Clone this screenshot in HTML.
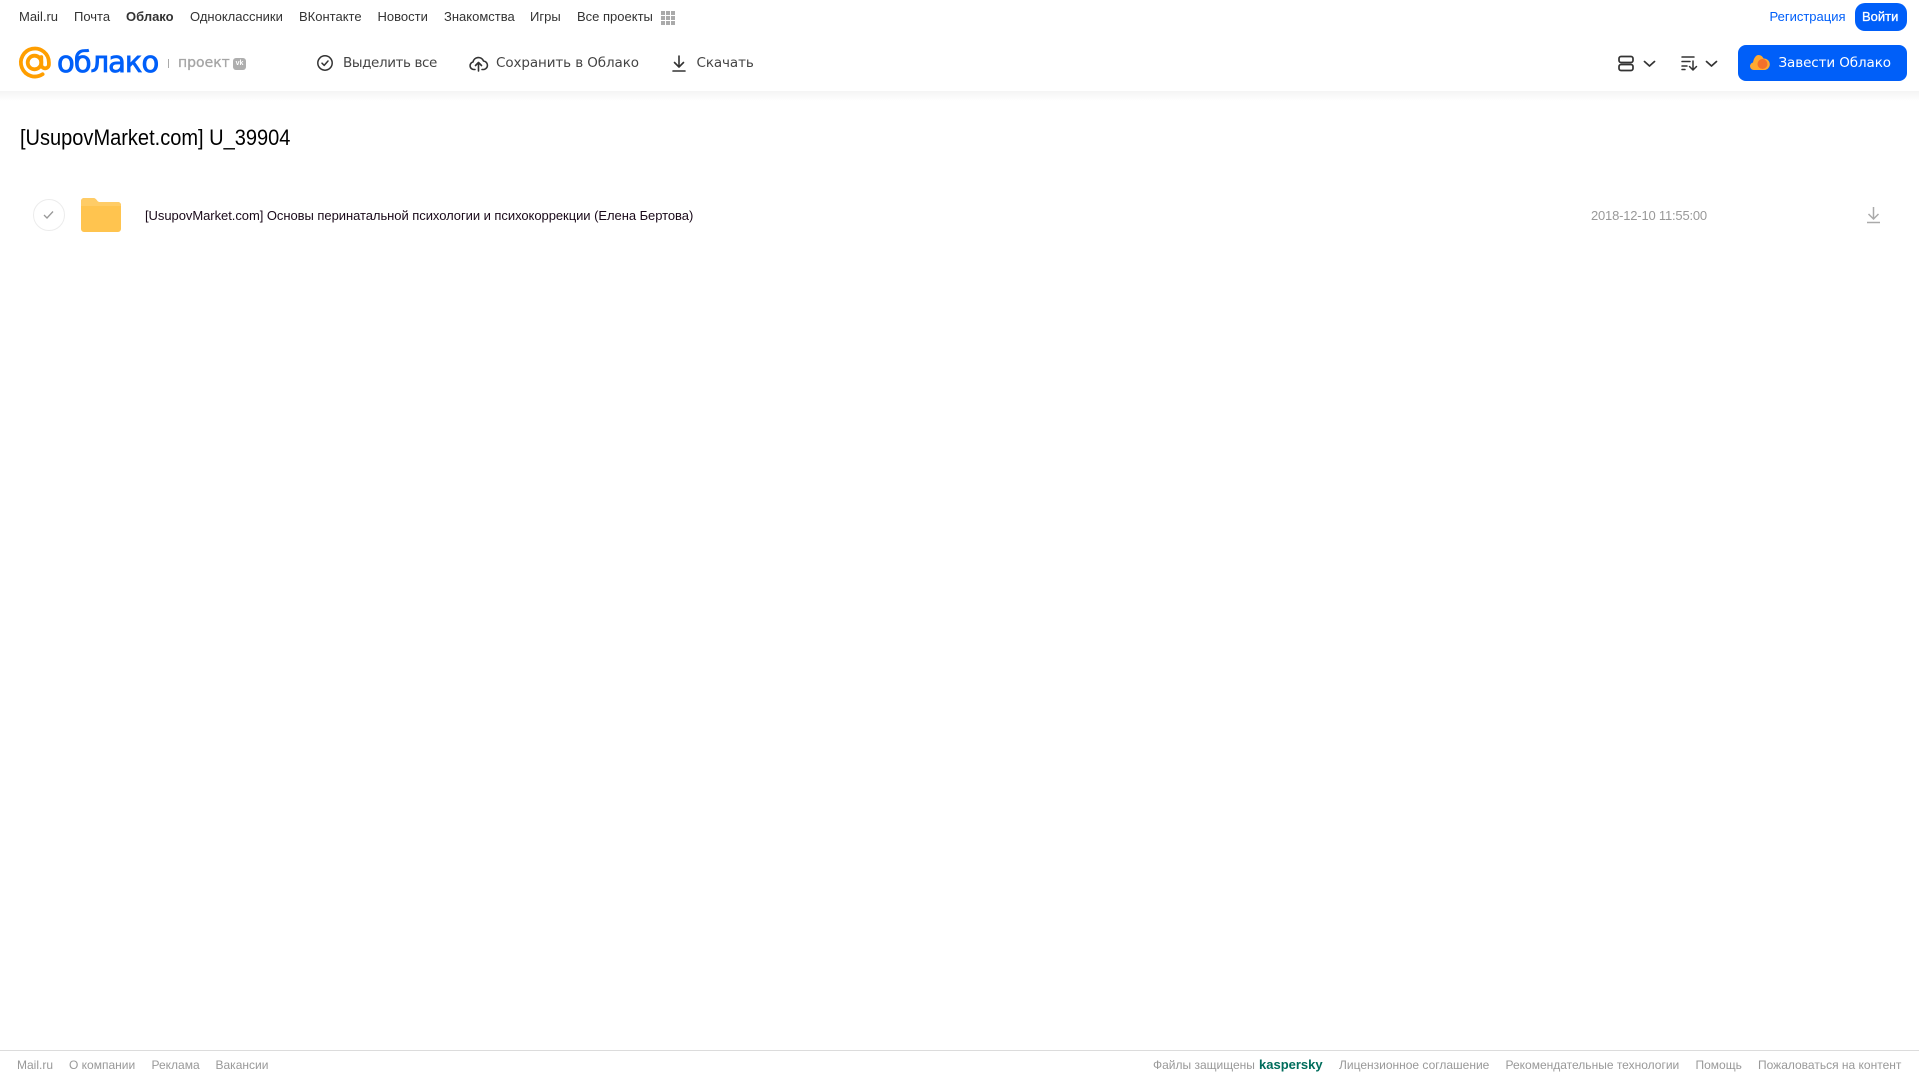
<!DOCTYPE html>
<html lang="ru"><head><meta charset="utf-8"><title>[UsupovMarket.com] U_39904</title>
<style>
html,body{margin:0;padding:0;background:#fff}
body{width:1919px;height:1079px;position:relative;overflow:hidden;font-family:"Liberation Sans",sans-serif}
.t{position:absolute;white-space:nowrap;line-height:20px;height:20px}
.n{font-size:13px;top:7px;color:#333}
.b{font-family:"DejaVu Sans",sans-serif;font-size:13.5px;top:53px;color:#444}
.f{font-size:12px;top:1055px;color:#999}
svg{position:absolute;overflow:visible}
#hdr{position:absolute;left:0;top:91px;width:1919px;height:10px;background:linear-gradient(#f4f4f4,#fff)}
</style></head><body>
<div id="hdr"></div>
<span class="t n" style="left:19px">Mail.ru</span>
<span class="t n" style="left:74px">Почта</span>
<span class="t n" style="left:126px;font-weight:bold">Облако</span>
<span class="t n" style="left:190px">Одноклассники</span>
<span class="t n" style="left:299px">ВКонтакте</span>
<span class="t n" style="left:377.500px">Новости</span>
<span class="t n" style="left:444px">Знакомства</span>
<span class="t n" style="left:530px">Игры</span>
<span class="t n" style="left:577px">Все проекты</span>
<svg style="left:0;top:0" width="700" height="30" fill="#aaa"><rect x="661" y="11" width="4" height="4"/><rect x="666" y="11" width="4" height="4"/><rect x="671" y="11" width="4" height="4"/><rect x="661" y="16" width="4" height="4"/><rect x="666" y="16" width="4" height="4"/><rect x="671" y="16" width="4" height="4"/><rect x="661" y="21" width="4" height="4"/><rect x="666" y="21" width="4" height="4"/><rect x="671" y="21" width="4" height="4"/></svg>
<span class="t n" style="left:1769.500px;color:#005ff9">Регистрация</span>
<div style="position:absolute;left:1855px;top:3px;width:52px;height:28px;border-radius:10px;background:#005ff9"></div>
<span class="t n" style="left:1862px;color:#fff;-webkit-text-stroke:.3px #fff">Войти</span>

<svg style="left:0;top:0" width="60" height="90" fill="none" stroke="#ff9e00" stroke-width="3.800" stroke-linecap="round"><circle cx="34.500" cy="62.500" r="6.800"/><path d="M41.300 57v7.500a3.800 3.800 0 0 0 7.600 0v-2a14 14 0 1 0-6.300 11.700"/></svg>
<span class="t" style="left:57px;top:44px;height:36px;line-height:36px;font-family:'DejaVu Sans',sans-serif;font-size:29px;color:#005ff9;-webkit-text-stroke:.8px #005ff9;letter-spacing:-1px">облако</span>
<div style="position:absolute;left:168px;top:59px;width:1px;height:9px;background:#aaa"></div>
<span class="t" style="left:178px;top:53px;font-family:'DejaVu Sans',sans-serif;font-size:14px;color:#a5a5a5;-webkit-text-stroke:.3px #a5a5a5">проект</span>
<div style="position:absolute;left:233px;top:58px;width:13px;height:12px;border-radius:3px;background:#aeaeae;color:#fff;font-size:7px;font-weight:bold;line-height:12px;text-align:center">vk</div>

<svg style="left:317px;top:55px" width="16" height="16" viewBox="0 0 16 16" fill="none" stroke="#333" stroke-width="1.500"><circle cx="8" cy="8" r="7.200"/><path d="M5 8.200l2.200 2.200L11 6" stroke-linecap="round" stroke-linejoin="round"/></svg>
<span class="t b" style="left:343px;letter-spacing:-.4px">Выделить все</span>
<svg style="left:469px;top:55px" width="19" height="17" viewBox="0 0 19 17" fill="none" stroke="#333" stroke-width="1.600" stroke-linecap="round" stroke-linejoin="round"><path d="M6 14.500H4.800a3.800 3.800 0 0 1-.8-7.500 5.500 5.500 0 0 1 10.500-1 4.300 4.300 0 0 1 .5 8.500H13"/><path d="M9.500 16V8M6.500 10.500l3-3 3 3"/></svg>
<span class="t b" style="left:496px;letter-spacing:-.1px">Сохранить в Облако</span>
<svg style="left:672px;top:55px" width="14" height="17" viewBox="0 0 14 17" fill="none" stroke="#333" stroke-width="1.600" stroke-linecap="round" stroke-linejoin="round"><path d="M7 1v10.500M2.500 7.500L7 12l4.500-4.500"/><path d="M1 16h12"/></svg>
<span class="t b" style="left:696.500px;letter-spacing:-.1px">Скачать</span>

<svg style="left:1618px;top:55px" width="40" height="17" fill="none" stroke="#333" stroke-width="1.700"><rect x="1" y="1.500" width="14" height="6" rx="2"/><rect x="1" y="9.500" width="14" height="6" rx="2"/><path d="M26.500 6.500l5 4.500 5-4.500" stroke-linecap="round" stroke-linejoin="round"/></svg>
<svg style="left:1681px;top:55px" width="40" height="17" fill="none" stroke="#333" stroke-width="1.500" stroke-linecap="round" stroke-linejoin="round"><path d="M1 2h12M1 6.500h8M1 11h5M1 14.500h3"/><path d="M12 6v9M8.500 11.500l3.500 3.500 3.500-3.500"/><path d="M25.500 6.500l5 4.500 5-4.500" stroke-width="1.700"/></svg>
<div style="position:absolute;left:1738px;top:45px;width:169px;height:36px;border-radius:8px;background:#005ff9"></div>
<svg style="left:1750px;top:54px" width="19" height="17" viewBox="0 0 19 17"><path d="M4 16a3.800 3.800 0 0 1-1-7.500C3.800 4 6 1 8.500 1c2.500 0 4 1.500 5 3.500a5.500 5.500 0 0 1 1 11.500z" fill="#ffa930"/><circle cx="12.500" cy="10" r="5" fill="#f4702a"/></svg>
<span class="t b" style="left:1778.500px;color:#fff;letter-spacing:-.1px">Завести Облако</span>

<span class="t" style="left:20px;top:125px;height:26px;line-height:26px;font-size:22px;color:#000;transform:scaleX(.91);transform-origin:left center">[UsupovMarket.com] U_39904</span>

<div style="position:absolute;left:33px;top:199px;width:30px;height:30px;border:1px solid #ececec;border-radius:50%"></div>
<svg style="left:43px;top:210px" width="12" height="10" fill="none" stroke="#999" stroke-width="1.300"><path d="M1 5l3 3 6-6.500"/></svg>
<svg style="left:81px;top:198px" width="40" height="34" viewBox="0 0 40 34"><path d="M3 0h9c2 0 3 1 4 2.500S18 4 19 4h18a3 3 0 0 1 3 3v24a3 3 0 0 1-3 3H3a3 3 0 0 1-3-3V3a3 3 0 0 1 3-3z" fill="#ffc44f"/><path d="M0 8h40v-1a3 3 0 0 0-3-3H19c-1 0-2 0-3-1.500S14 0 12 0H3a3 3 0 0 0-3 3z" fill="#ffcc66"/></svg>
<span class="t" style="left:145px;top:206px;font-size:13px;color:#1a0a1a;letter-spacing:-.05px">[UsupovMarket.com] Основы перинатальной психологии и психокоррекции (Елена Бертова)</span>
<span class="t" style="left:1591px;top:206px;font-size:13px;color:#999;letter-spacing:-.2px">2018-12-10 11:55:00</span>
<svg style="left:1867px;top:206px" width="13" height="18" viewBox="0 0 13 18" fill="none" stroke="#aaa" stroke-width="1.500"><path d="M6.500 1v11.500M1.500 8l5 5 5-5"/><path d="M0 16.500h13"/></svg>

<div style="position:absolute;left:0;top:1050px;width:1919px;height:1px;background:#dcdcdc"></div>
<span class="t f" style="left:17px">Mail.ru</span>
<span class="t f" style="left:69px">О компании</span>
<span class="t f" style="left:151.500px">Реклама</span>
<span class="t f" style="left:215.500px">Вакансии</span>
<span class="t f" style="left:1153px">Файлы защищены</span>
<span class="t f" style="left:1259px;font-size:13px;font-weight:bold;color:#006d5c">kaspersky</span>
<span class="t f" style="left:1339px">Лицензионное соглашение</span>
<span class="t f" style="left:1505.500px">Рекомендательные технологии</span>
<span class="t f" style="left:1695.500px">Помощь</span>
<span class="t f" style="left:1758px">Пожаловаться на контент</span>
</body></html>
